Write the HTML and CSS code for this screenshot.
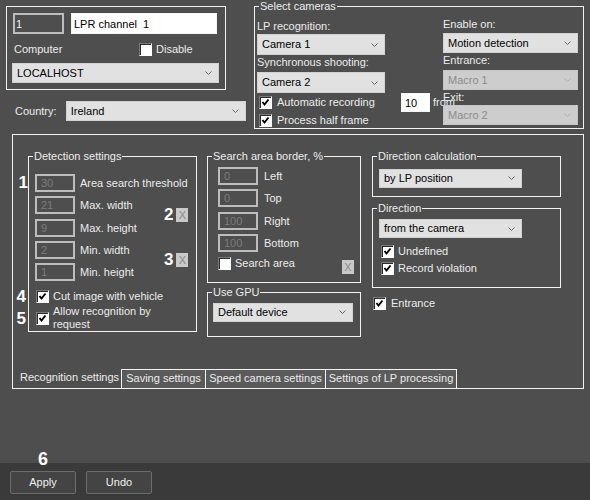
FILE: index.html
```html
<!DOCTYPE html>
<html lang="en">
<head>
    <meta charset="UTF-8">
    <title>LPR channel settings</title>
    <link rel="stylesheet" href="styles.css">
</head>
<body>
<div class="window">
    <div class="workspace">
        <div class="top">
            <div class="ident-col">
                <div class="ident-box">
                    <div class="ident-row">
                        <input class="field field-dark num" value="1" readonly>
                        <input class="field field-light name" value="LPR channel  1" readonly>
                    </div>
                    <div class="computer-row">
                        <span class="computer-label">Computer</span>
                        <label class="check"><span class="cb"></span>Disable</label>
                    </div>
                    <div class="select host"><span>LOCALHOST</span><svg viewBox="0 0 7 4"><polyline points="0.5,0.5 3.5,3.5 6.5,0.5"/></svg></div>
                </div>
                <div class="country-row">
                    <span class="country-label">Country:</span>
                    <div class="select country"><span>Ireland</span><svg viewBox="0 0 7 4"><polyline points="0.5,0.5 3.5,3.5 6.5,0.5"/></svg></div>
                </div>
            </div>

            <fieldset class="group cameras">
                <legend>Select cameras</legend>
                <div class="cameras-body">
                    <div class="cam-col">
                        <span class="lbl">LP recognition:</span>
                        <div class="select cam1"><span>Camera 1</span><svg viewBox="0 0 7 4"><polyline points="0.5,0.5 3.5,3.5 6.5,0.5"/></svg></div>
                        <span class="lbl sync-lbl">Synchronous shooting:</span>
                        <div class="select cam2"><span>Camera 2</span><svg viewBox="0 0 7 4"><polyline points="0.5,0.5 3.5,3.5 6.5,0.5"/></svg></div>
                        <label class="check tall"><span class="cb"><svg viewBox="0 0 11 11"><polyline points="2.5,5 4.5,7.5 8.5,2.5"/></svg></span>Automatic recording</label>
                        <label class="check tall"><span class="cb"><svg viewBox="0 0 11 11"><polyline points="2.5,5 4.5,7.5 8.5,2.5"/></svg></span>Process half frame</label>
                    </div>
                    <div class="rec-col">
                        <div class="rec-row">
                            <input class="field field-light frames" value="10" readonly>
                            <span class="from">from</span>
                        </div>
                    </div>
                    <div class="enable-col">
                        <span class="lbl">Enable on:</span>
                        <div class="select en-select"><span>Motion detection</span><svg viewBox="0 0 7 4"><polyline points="0.5,0.5 3.5,3.5 6.5,0.5"/></svg></div>
                        <span class="lbl entr-lbl">Entrance:</span>
                        <div class="select disabled macro1"><span>Macro 1</span><svg viewBox="0 0 7 4"><polyline points="0.5,0.5 3.5,3.5 6.5,0.5"/></svg></div>
                        <span class="lbl exit-lbl">Exit:</span>
                        <div class="select disabled macro2"><span>Macro 2</span><svg viewBox="0 0 7 4"><polyline points="0.5,0.5 3.5,3.5 6.5,0.5"/></svg></div>
                    </div>
                </div>
            </fieldset>
        </div>

        <div class="panel">
            <div class="panel-body">
                <fieldset class="group detection">
                    <legend>Detection settings</legend>
                    <div class="det-body">
                        <div class="det-grid">
                            <span class="cell"><span class="mark mark-1">1</span><input class="field dis-field" value="30" readonly></span>
                            <span class="det-lbl wide">Area search threshold</span>
                            <span class="cell"><input class="field dis-field" value="21" readonly></span>
                            <span class="det-lbl">Max. width</span>
                            <span class="cell"><input class="field dis-field" value="9" readonly></span>
                            <span class="det-lbl">Max. height</span>
                            <span class="cell"><input class="field dis-field" value="2" readonly></span>
                            <span class="det-lbl">Min. width</span>
                            <span class="cell"><input class="field dis-field" value="1" readonly></span>
                            <span class="det-lbl">Min. height</span>
                            <div class="xcol">
                                <div class="xgroup"><span class="xmark">2</span><span class="xbtn">X</span></div>
                                <div class="xgroup"><span class="xmark">3</span><span class="xbtn">X</span></div>
                            </div>
                        </div>
                        <label class="check det-check cut"><span class="mark mark-4">4</span><span class="cb"><svg viewBox="0 0 11 11"><polyline points="2.5,5 4.5,7.5 8.5,2.5"/></svg></span>Cut image with vehicle</label>
                        <label class="check det-check allow"><span class="mark mark-4">5</span><span class="cb"><svg viewBox="0 0 11 11"><polyline points="2.5,5 4.5,7.5 8.5,2.5"/></svg></span><span>Allow recognition by<br>request</span></label>
                    </div>
                </fieldset>

                <div class="mid-col">
                    <fieldset class="group search">
                        <legend>Search area border, %</legend>
                        <div class="search-body">
                            <div class="search-grid">
                                <input class="field dis-field" value="0" readonly><span>Left</span>
                                <input class="field dis-field" value="0" readonly><span>Top</span>
                                <input class="field dis-field" value="100" readonly><span>Right</span>
                                <input class="field dis-field" value="100" readonly><span>Bottom</span>
                            </div>
                            <div class="area-row">
                                <label class="check"><span class="cb"></span>Search area</label>
                                <span class="xbtn">X</span>
                            </div>
                        </div>
                    </fieldset>
                    <fieldset class="group gpu">
                        <legend>Use GPU</legend>
                        <div class="gpu-body">
                            <div class="select gpu-select"><span>Default device</span><svg viewBox="0 0 7 4"><polyline points="0.5,0.5 3.5,3.5 6.5,0.5"/></svg></div>
                        </div>
                    </fieldset>
                </div>

                <div class="dir-col">
                    <fieldset class="group">
                        <legend>Direction calculation</legend>
                        <div class="calc-body">
                            <div class="select dir-select"><span>by LP position</span><svg viewBox="0 0 7 4"><polyline points="0.5,0.5 3.5,3.5 6.5,0.5"/></svg></div>
                        </div>
                    </fieldset>
                    <fieldset class="group direction">
                        <legend>Direction</legend>
                        <div class="direction-body">
                            <div class="select dir-select"><span>from the camera</span><svg viewBox="0 0 7 4"><polyline points="0.5,0.5 3.5,3.5 6.5,0.5"/></svg></div>
                            <label class="check undef"><span class="cb"><svg viewBox="0 0 11 11"><polyline points="2.5,5 4.5,7.5 8.5,2.5"/></svg></span>Undefined</label>
                            <label class="check violation"><span class="cb"><svg viewBox="0 0 11 11"><polyline points="2.5,5 4.5,7.5 8.5,2.5"/></svg></span>Record violation</label>
                        </div>
                    </fieldset>
                    <label class="check entrance"><span class="cb"><svg viewBox="0 0 11 11"><polyline points="2.5,5 4.5,7.5 8.5,2.5"/></svg></span>Entrance</label>
                </div>
            </div>
            <div class="tabs">
                <div class="tab active">Recognition settings</div>
                <div class="tab t-saving">Saving settings</div>
                <div class="tab t-speed">Speed camera settings</div>
                <div class="tab t-lp">Settings of LP processing</div>
            </div>
        </div>
    </div>

    <div class="footer">
        <button class="btn"><span class="mark mark-6">6</span>Apply</button>
        <button class="btn">Undo</button>
    </div>
</div>
</body>
</html>
```

FILE: styles.css
```css
:root {
    --bg: #4e4e4e;
    --bar: #3a3a3a;
    --line: #f2f2f2;
    --text: #ececec;
    --combo: #e1e1e1;
}
* {
    box-sizing: border-box;
}
body {
    margin: 0;
    background-color: var(--bg);
    color: var(--text);
    font-family: "Liberation Sans", Arial, sans-serif;
    font-size: 11px;
    line-height: 13px;
}
.window {
    width: 590px;
    height: 500px;
    display: flex;
    flex-direction: column;
    overflow: hidden;
}
.workspace {
    flex: 1;
}

/* generic controls */
.field {
    font: inherit;
    margin: 0;
    outline: none;
    padding: 0;
}
.field-dark {
    background: var(--bg);
    color: #f4f4f4;
    border: 2px solid #bdbdbd;
}
.field-light {
    background: #fff;
    color: #000;
    border: 1px solid #f6f6f6;
    padding-left: 2px;
}
.dis-field {
    width: 40px;
    height: 18px;
    background: transparent;
    color: #7c7c7c;
    border: 2px solid #bdbdbd;
    padding-left: 4px;
}
.select {
    display: flex;
    align-items: center;
    height: 20px;
    background-color: var(--combo);
    border: 1px solid #d2d2d2;
    color: #000;
    padding: 0 6px 0 4px;
    white-space: nowrap;
}
.select svg {
    margin-left: auto;
    width: 7px;
    height: 4px;
    fill: none;
    stroke: #6a6a6a;
    stroke-width: 1;
}
.select.disabled {
    background-color: #cdcdcd;
    border-color: #c6c6c6;
    color: #8c8c8c;
}
.select.disabled svg {
    stroke: #b0b0b0;
}
.check {
    display: flex;
    align-items: center;
    gap: 4px;
    white-space: nowrap;
}
.cb {
    position: relative;
    flex-shrink: 0;
    width: 13px;
    height: 13px;
    background: #fff;
    border: 1px solid;
    border-color: #7a7a7a #fff #fff #7a7a7a;
    box-shadow: inset 1px 1px 0 #2c2c2c;
}
.cb svg {
    display: block;
    width: 11px;
    height: 11px;
    fill: none;
    stroke: #000;
    stroke-width: 1.9;
}
.xbtn {
    width: 12px;
    height: 14px;
    background: #c9c9c9;
    color: #8a8a8a;
    text-align: center;
    line-height: 14px;
}
.lbl {
    display: block;
    height: 13px;
    white-space: nowrap;
}
.mark {
    position: absolute;
    color: #fff;
    font: bold 17px/16px "Liberation Sans", Arial, sans-serif;
}

fieldset {
    margin: 0;
    padding: 0;
    min-width: 0;
}
.group {
    border: 1px solid var(--line);
}
legend {
    margin-left: 4px;
    padding: 0 1px;
    line-height: 13px;
    white-space: nowrap;
}

/* top area */
.top {
    display: flex;
    align-items: flex-start;
    padding-left: 6px;
}
.ident-col {
    flex-shrink: 0;
    width: 240px;
}
.ident-box {
    margin-top: 6px;
    width: 220px;
    height: 84px;
    border: 1px solid var(--line);
    padding: 6px 0 0 6px;
}
.ident-row {
    display: flex;
    gap: 7px;
}
.num {
    width: 51px;
    height: 21px;
    padding-left: 1px;
}
.name {
    width: 146px;
    height: 21px;
}
.computer-row {
    display: flex;
    align-items: center;
    height: 13px;
    margin-top: 9px;
}
.computer-label {
    width: 126px;
    padding-left: 1px;
}
.host {
    margin: 7px 0 0 -1px;
    width: 207px;
}
.country-row {
    display: flex;
    align-items: center;
    margin-top: 11px;
    padding-left: 9px;
}
.country-label {
    width: 51px;
}
.country {
    width: 181px;
}

.cameras {
    flex-shrink: 0;
    margin-left: 8px;
    width: 330px;
}
.cameras-body {
    display: flex;
    height: 115px;
    padding-left: 2px;
}
.cam-col {
    flex-shrink: 0;
    width: 128px;
    padding-top: 7px;
}
.cam1 {
    margin-top: 1px;
    height: 21px;
}
.sync-lbl {
    margin-top: 1px;
}
.cam2 {
    margin-top: 3px;
    height: 21px;
}
.check.tall {
    height: 18px;
    padding-left: 2px;
    gap: 5px;
}
.rec-col {
    flex-shrink: 0;
    width: 58px;
    padding-top: 80px;
}
.rec-row {
    display: flex;
    align-items: center;
}
.rec-row > * {
    flex-shrink: 0;
}
.frames {
    width: 29px;
    height: 19px;
    margin-left: 16px;
    padding-left: 3px;
}
.from {
    margin-left: 3px;
}
.enable-col {
    flex-shrink: 0;
    width: 135px;
    padding-top: 5px;
}
.en-select {
    margin-top: 2px;
}
.entr-lbl {
    margin-top: 1px;
}
.macro1 {
    margin-top: 3px;
}
.exit-lbl {
    margin-top: 1px;
}
.macro2 {
    margin-top: 1px;
}

/* recognition settings panel */
.panel {
    margin: 5px 0 0 12px;
    width: 572px;
    height: 255px;
    border: 1px solid var(--line);
    display: flex;
    flex-direction: column;
}
.panel-body {
    flex: 1;
    display: flex;
    align-items: flex-start;
    padding: 15px 0 0 15px;
}
.detection {
    width: 169px;
    flex-shrink: 0;
}
.det-body {
    height: 168px;
    padding: 11px 0 0 6px;
}
.det-grid {
    display: grid;
    grid-template-columns: 40px 79px 1fr;
    grid-auto-rows: 18px;
    column-gap: 5px;
    row-gap: 4.3px;
}
.cell {
    position: relative;
    grid-column: 1;
}
.det-lbl {
    grid-column: 2;
    line-height: 18px;
    white-space: nowrap;
}
.det-lbl.wide {
    grid-column: 2 / 4;
}
.mark-1 {
    right: calc(100% + 7px);
    top: 1px;
}
.xcol {
    grid-column: 3;
    grid-row: 2 / 6;
    display: flex;
    flex-direction: column;
    gap: 31px;
    padding-top: 12px;
}
.xgroup {
    display: flex;
    align-items: center;
    gap: 3px;
}
.xmark {
    color: #fff;
    font: bold 17px/14px "Liberation Sans", Arial, sans-serif;
}
.det-check {
    position: relative;
    margin-left: 1px;
}
.mark-4 {
    right: calc(100% + 10px);
    top: -1px;
}
.cut {
    margin-top: 9px;
    height: 13px;
}
.allow {
    margin-top: 2px;
}
.allow .mark-4 {
    top: 6px;
}

.mid-col {
    flex-shrink: 0;
    width: 154px;
    margin-left: 10px;
}
.search-body {
    height: 119px;
    padding: 3.5px 6px 0 10px;
}
.search-grid {
    display: grid;
    grid-template-columns: 40px 1fr;
    grid-auto-rows: 18px;
    column-gap: 6px;
    row-gap: 4.5px;
    line-height: 18px;
}
.area-row {
    display: flex;
    align-items: flex-start;
    margin-top: 5px;
}
.area-row .xbtn {
    margin: 3px 0 0 auto;
}
.gpu {
    margin-top: 2.5px;
}
.gpu-body {
    padding: 4px 0 14px 5px;
}
.gpu-select {
    width: 140px;
    height: 19px;
}

.dir-col {
    flex-shrink: 0;
    width: 189px;
    margin-left: 11px;
}
.calc-body {
    padding: 5.5px 0 8px 6px;
}
.dir-select {
    width: 143px;
    height: 19px;
}
.direction {
    margin-top: 5.5px;
}
.direction-body {
    padding: 4px 0 12.5px 6px;
}
.undef {
    margin: 7px 0 0 2px;
}
.violation {
    margin: 3.5px 0 0 2px;
}
.entrance {
    margin: 9px 0 0 1px;
    gap: 5px;
}

.tabs {
    display: flex;
    height: 19px;
}
.tab {
    height: 19px;
    line-height: 17px;
    text-align: center;
    white-space: nowrap;
    background-color: #5a5a5a;
    border-top: 1px solid var(--line);
    border-left: 1px solid var(--line);
}
.tab.active {
    width: 108px;
    padding-left: 7px;
    text-align: left;
    background: none;
    border: none;
}
.t-saving { width: 84px; }
.t-speed { width: 120px; }
.t-lp {
    width: 132px;
    border-right: 1px solid var(--line);
}

/* bottom bar */
.footer {
    height: 37px;
    display: flex;
    gap: 10px;
    padding: 8px 10px;
    background-color: var(--bar);
}
.btn {
    position: relative;
    width: 66px;
    height: 23px;
    margin: 0;
    padding: 0;
    font: inherit;
    color: #f0f0f0;
    background-color: #444;
    border: 1px solid #6c6c6c;
    border-radius: 2px;
}
.mark-6 {
    left: 0;
    right: 0;
    bottom: calc(100% + 4px);
    text-align: center;
    font-size: 18px;
    line-height: 18px;
}
```
